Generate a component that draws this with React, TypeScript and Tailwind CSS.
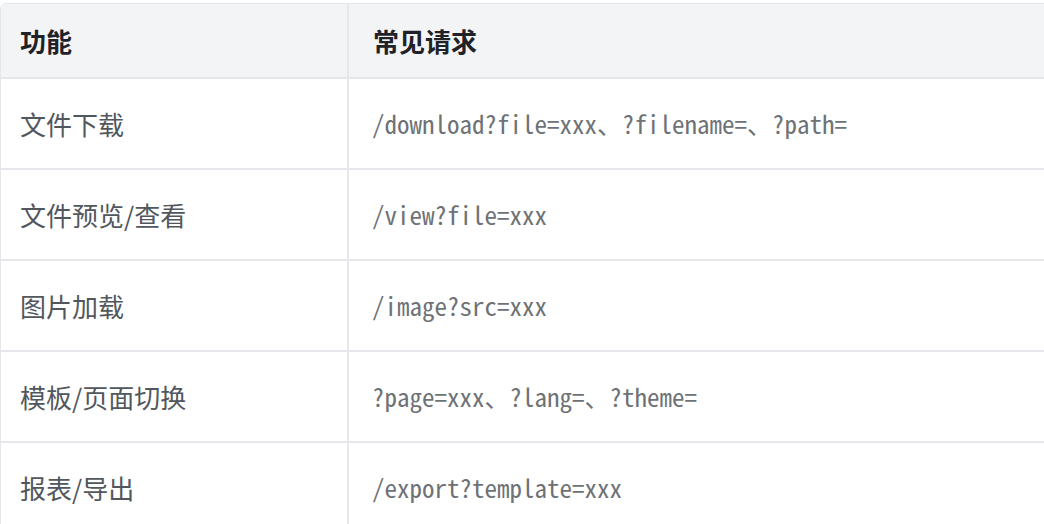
import React from "react";

const rows = [
  { name: "文件下载", req: "/download?file=xxx、?filename=、?path=" },
  { name: "文件预览/查看", req: "/view?file=xxx" },
  { name: "图片加载", req: "/image?src=xxx" },
  { name: "模板/页面切换", req: "?page=xxx、?lang=、?theme=" },
  { name: "报表/导出", req: "/export?template=xxx" },
];

export default function App() {
  return (
    <div className="w-[1044px] h-[524px] overflow-hidden bg-white pt-[3px] font-['Noto_Sans_CJK_SC',sans-serif]">
      <div className="w-[1100px] border border-[#e5e7eb] rounded-md overflow-hidden">
        <table className="w-full border-collapse">
          <thead>
            <tr className="h-[74px] bg-[#f3f4f6] border-b-2 border-[#e5e7eb]">
              <th className="w-[347px] pl-[19px] text-left text-[26px] font-bold text-[#1f2328] border-r-2 border-[#e5e7eb]">
                功能
              </th>
              <th className="pl-6 text-left text-[26px] font-bold text-[#1f2328]">
                常见请求
              </th>
            </tr>
          </thead>
          <tbody>
            {rows.map((r) => (
              <tr key={r.name} className="h-[91px] border-b-2 border-[#e5e7eb]">
                <td className="pl-[19px] text-[26px] text-[#52575d] border-r-2 border-[#e5e7eb]">
                  {r.name}
                </td>
                <td className="pl-[23px] text-[25px] text-[#6e7276] font-['Noto_Sans_Mono_CJK_SC','Liberation_Mono',monospace]">
                  {r.req}
                </td>
              </tr>
            ))}
          </tbody>
        </table>
      </div>
    </div>
  );
}
